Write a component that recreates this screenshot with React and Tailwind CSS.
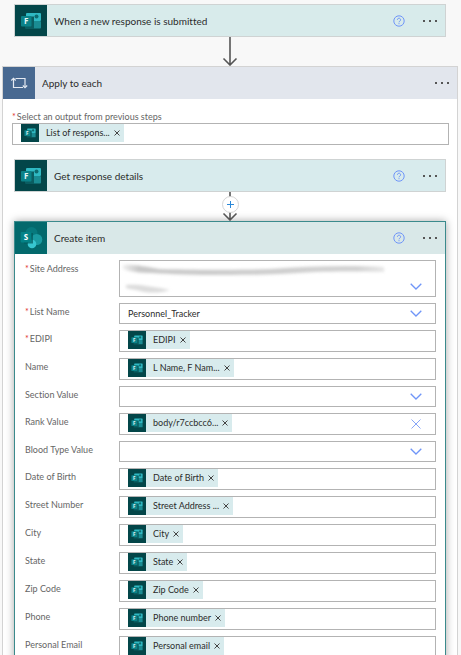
import { useId } from "react";

function FormsIcon({ className }) {
  return (
    <svg viewBox="0 0 32 32" className={className} aria-hidden="true">
      <rect width="32" height="32" fill="#034649" />
      <rect x="11" y="8" width="15" height="8" rx="1" fill="#2fb9c3" />
      <circle cx="21.5" cy="11.5" r="2" fill="#0d6b70" />
      <rect x="18" y="16" width="8" height="7.5" rx="1" fill="#1a8c93" />
      <path d="M10 11.5h9V24h-8a1 1 0 0 1-1-1z" fill="#0a5d61" />
      <rect x="6" y="11" width="10.5" height="10.5" rx="1" fill="#0b8288" />
      <text x="11.3" y="19" textAnchor="middle" className="font-['Open_Sans',sans-serif] text-[8px] font-bold" fill="#e6f7f7">
        F
      </text>
    </svg>
  );
}

function SharePointIcon({ className }) {
  return (
    <svg viewBox="0 0 32 32" className={className} aria-hidden="true">
      <rect width="32" height="32" fill="#03696c" />
      <circle cx="16.5" cy="11" r="6" fill="#07797d" />
      <circle cx="21.7" cy="17.5" r="5.6" fill="#1a9ba1" />
      <circle cx="17" cy="22" r="4.3" fill="#37c6d0" />
      <path d="M9 11h9v10.5H9z" fill="#035659" opacity=".7" />
      <rect x="5.7" y="10" width="10.6" height="10.6" rx="1" fill="#038387" />
      <text x="11" y="18.3" textAnchor="middle" className="font-['Open_Sans',sans-serif] text-[8px] font-bold" fill="#ffffff">
        S
      </text>
    </svg>
  );
}

function LoopIcon({ className }) {
  return (
    <svg viewBox="0 0 32 32" className={className} aria-hidden="true">
      <rect width="32" height="32" fill="#486991" />
      <g fill="none" stroke="#e4eaf2" strokeWidth="1.2">
        <path d="M10.500 12v8.500H20M12.500 11.500h9.500V20" />
        <path d="M8.300 13.500l2.200-2.200 2.200 2.200M19.800 18.500l2.200 2.200 2.200-2.200" />
      </g>
    </svg>
  );
}

function HelpButton() {
  return (
    <button type="button" aria-label="Help" className="flex size-4 items-center justify-center">
      <svg viewBox="0 0 12 12" className="size-3" fill="none" stroke="#6f95f8" aria-hidden="true">
        <circle cx="6" cy="6" r="5.2" />
        <path d="M4.400 4.800a1.600 1.600 0 1 1 2.500 1.300c-.6.4-.9.600-.9 1.200" />
        <path d="M6 8.200v1" />
      </svg>
    </button>
  );
}

function MoreButton() {
  return (
    <button type="button" aria-label="More" className="flex h-4 w-4 items-center justify-between px-px">
      <span className="size-[2px] bg-[#555]" />
      <span className="size-[2px] bg-[#555]" />
      <span className="size-[2px] bg-[#555]" />
    </button>
  );
}

function CardHeader({ Icon, title, help, className }) {
  return (
    <header className={`flex items-stretch ${className}`}>
      <Icon className="size-8 shrink-0" />
      <div className="flex min-w-0 flex-1 items-center pr-[7px] pl-[7px]">
        <h2 className="flex-1 truncate text-[10px] leading-4 text-[#2b2b2b]">{title}</h2>
        <div className="flex items-center gap-[15px] pb-px">
          {help && <HelpButton />}
          <MoreButton />
        </div>
      </div>
    </header>
  );
}

function Arrow({ plus }) {
  return (
    <div className="relative flex justify-center">
      <svg viewBox="0 0 20 29" className="h-[29px] w-5" fill="none" stroke="#555" strokeWidth="1.600" aria-hidden="true">
        <path d="M10 0v28M3.500 21.500L10 28l6.500-6.500" />
      </svg>
      {plus && (
        <button
          type="button"
          aria-label="Insert a new step"
          className="absolute top-1 flex size-[17px] items-center justify-center rounded-full border border-[#d5d5d5] bg-white"
        >
          <svg viewBox="0 0 9 9" className="size-[9px]" stroke="#2b88d8" aria-hidden="true">
            <path d="M4.500 1v7M1 4.500h7" />
          </svg>
        </button>
      )}
    </div>
  );
}

function Token({ text }) {
  return (
    <span className="flex h-[18px] shrink-0 items-center bg-[#d8ebed]">
      <FormsIcon className="size-[18px]" />
      <span className="pl-[7px] text-[9px] leading-4 text-[#2b2b2b]">{text}</span>
      <button type="button" aria-label={`Remove ${text}`} className="flex h-4 w-[14px] items-center justify-center">
        <svg viewBox="0 0 6 6" className="size-[6px]" stroke="#444" aria-hidden="true">
          <path d="M.5.5l5 5M5.500.5l-5 5" />
        </svg>
      </button>
    </span>
  );
}

function TokenBox({ id, token, clearable }) {
  return (
    <div className="flex h-[22px] min-w-0 flex-1 items-start border border-[#b3b3b3] bg-white pr-[13px] pl-2">
      <Token text={token} />
      <input id={id} type="text" className="h-5 w-0 min-w-0 flex-1 text-[9px] outline-none" />
      {clearable && (
        <button type="button" aria-label="Clear" className="flex h-5 w-3 items-center justify-center">
          <svg viewBox="0 0 10 10" className="size-[10px]" fill="none" stroke="#86a5f8" aria-hidden="true">
            <path d="M.5.5l9 9M9.500.5l-9 9" />
          </svg>
        </button>
      )}
    </div>
  );
}

function Smudge() {
  return (
    <svg viewBox="0 0 316 35" className="absolute top-0 left-0 h-[35px] w-[316px] max-w-full" aria-hidden="true">
      <defs>
        <filter id="soft" x="-10%" y="-100%" width="120%" height="300%">
          <feGaussianBlur stdDeviation="1.600" />
        </filter>
        <linearGradient id="fade" x1="0" x2="1">
          <stop offset="0" stopColor="#c9c9c9" stopOpacity=".3" />
          <stop offset=".06" stopColor="#c8c8c8" />
          <stop offset=".9" stopColor="#d2d2d2" />
          <stop offset="1" stopColor="#cfcfcf" stopOpacity=".5" />
        </linearGradient>
      </defs>
      <g filter="url(#soft)">
        <path d="M3 4C14 3 26 6 40 8C90 9 120 9 150 8C190 5 230 4 265 6L265 11C230 10 200 10 160 13C110 15 60 14 32 12C20 12 10 11 3 8Z" fill="url(#fade)" />
        <path d="M6 24C16 23 30 25 50 29C38 33 26 32 16 29C12 28 8 28 6 27Z" fill="#dcdcdc" />
      </g>
    </svg>
  );
}

function SelectBox({ id, value, tall }) {
  return (
    <div className={`relative flex min-w-0 flex-1 border border-[#b3b3b3] bg-white ${tall ? "h-[37px]" : "h-[21px]"}`}>
      {tall && <Smudge />}
      <select id={id} className="w-full appearance-none bg-transparent px-2 text-[9px] text-[#2b2b2b] outline-none">
        <option>{value}</option>
      </select>
      <svg
        viewBox="0 0 12 7"
        className="pointer-events-none absolute right-[13px] bottom-[6px] h-[7px] w-3"
        fill="none"
        stroke="#6f95f8"
        strokeWidth="1.300"
        aria-hidden="true"
      >
        <path d="M.700.700L6 6 11.300.700" />
      </svg>
    </div>
  );
}

function Field({ label, required, kind, value }) {
  const id = useId();
  return (
    <div className="flex">
      <label htmlFor={id} className="flex w-[94px] shrink-0 gap-px pt-[3px] text-[9px] leading-3 text-[#666]">
        {required && <span className="text-[#e0342f]">*</span>}
        {label}
      </label>
      {kind === "token" || kind === "clearable" ? (
        <TokenBox id={id} token={value} clearable={kind === "clearable"} />
      ) : (
        <SelectBox id={id} value={value} tall={kind === "tall"} />
      )}
    </div>
  );
}

const fields = [
  { label: "Site Address", required: true, kind: "tall", value: "" },
  { label: "List Name", required: true, kind: "select", value: "Personnel_Tracker" },
  { label: "EDIPI", required: true, kind: "token", value: "EDIPI" },
  { label: "Name", kind: "token", value: "L Name, F Nam..." },
  { label: "Section Value", kind: "select", value: "" },
  { label: "Rank Value", kind: "clearable", value: "body/r7ccbcc6..." },
  { label: "Blood Type Value", kind: "select", value: "" },
  { label: "Date of Birth", kind: "token", value: "Date of Birth" },
  { label: "Street Number", kind: "token", value: "Street Address ..." },
  { label: "City", kind: "token", value: "City" },
  { label: "State", kind: "token", value: "State" },
  { label: "Zip Code", kind: "token", value: "Zip Code" },
  { label: "Phone", kind: "token", value: "Phone number" },
  { label: "Personal Email", kind: "token", value: "Personal email" },
];

export default function App() {
  return (
    <main className="h-screen overflow-hidden bg-[#f8f8f8] pt-1 pr-[3px] pl-[2px] font-['Lato','Noto_Sans',sans-serif] [font-variant-ligatures:none]">
      <section className="mx-3 h-[33px] overflow-hidden border border-[#cfd3d3] bg-[#d8ebeb]">
        <CardHeader Icon={FormsIcon} title="When a new response is submitted" help />
      </section>
      <Arrow />
      <section className="border border-[#d3d3d3] bg-white">
        <CardHeader Icon={LoopIcon} title="Apply to each" className="bg-[#e2e6ed]" />
        <div className="pt-3 pr-2 pl-[9px]">
          <label htmlFor="output" className="flex gap-px text-[9px] leading-3 text-[#666]">
            <span className="text-[#e0342f]">*</span>
            Select an output from previous steps
          </label>
          <div className="flex">
            <TokenBox id="output" token="List of respons..." />
          </div>
        </div>
        <div className="px-[11px] pt-[14px]">
          <section className="h-[33px] overflow-hidden border border-[#cfd3d3] bg-[#d8ebed]">
            <CardHeader Icon={FormsIcon} title="Get response details" help />
          </section>
          <Arrow plus />
          <section className="border border-[#3b8a8c] bg-white shadow-[0_0_8px_rgba(0,0,0,0.35)]">
            <CardHeader Icon={SharePointIcon} title="Create item" help className="bg-[#d9e8e8]" />
            <div className="flex flex-col gap-[6px] pt-[6px] pr-[9px] pb-3 pl-[10px]">
              {fields.map((field) => (
                <Field key={field.label} {...field} />
              ))}
            </div>
          </section>
        </div>
      </section>
    </main>
  );
}
